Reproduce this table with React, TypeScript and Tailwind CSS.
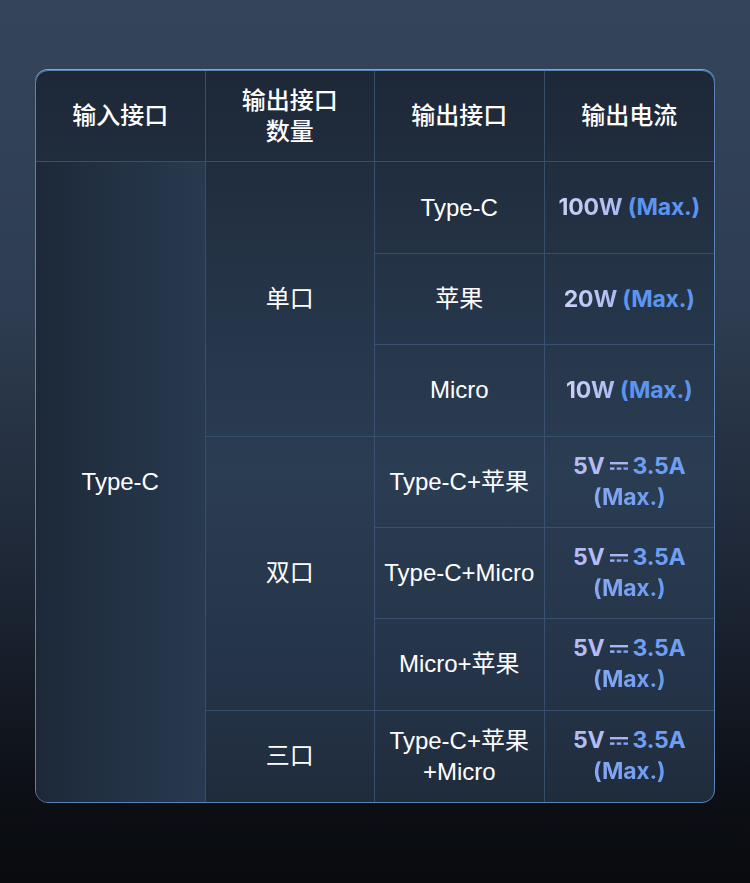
import React from 'react';

const txt = "font-['Liberation_Sans','Noto_Sans_CJK_SC',sans-serif]";
const num = "font-['Inter','Noto_Sans',sans-serif]";
const cell = 'flex items-center justify-center text-center border-[#40597a]/75';

/** DC symbol: solid bar over a dashed bar */
function DcMark() {
    return (
        <svg width="20" height="12" viewBox="0 0 20 12" className="mx-[4px] inline-block">
            <rect x="1" y="2" width="18" height="2.4" fill="#aab6f3" />
            <rect x="1" y="7.4" width="4.5" height="2.4" fill="#9aaef2" />
            <rect x="7.75" y="7.4" width="4.5" height="2.4" fill="#8aa6f2" />
            <rect x="14.5" y="7.4" width="4.5" height="2.4" fill="#7da0f2" />
        </svg>
    );
}

function Watt({ value }: { value: string }) {
    return (
        <span className={`${num} text-[23px] font-bold tracking-[-0.2px]`}>
            <span className="bg-gradient-to-r from-[#ccd2f6] to-[#a9b7f1] bg-clip-text text-transparent">{value} </span>
            <span className="text-[#5b95f0]">(Max.)</span>
        </span>
    );
}

function Amp() {
    return (
        <div className={`${num} text-[23px] font-bold leading-[31px] tracking-[-0.2px]`}>
            <div className="flex items-center justify-center">
                <span className="text-[#b3bcf4]">5V</span>
                <DcMark />
                <span className="text-[#6f9ff2]">3.5A</span>
            </div>
            <div className="bg-gradient-to-r from-[#93adf3] to-[#5b95f0] bg-clip-text text-transparent">(Max.)</div>
        </div>
    );
}

export default function App() {
    return (
        <div className="w-[750px] h-[883px] overflow-hidden bg-[linear-gradient(180deg,#34455a_0%,#2e3d51_35%,#1b2331_70%,#0c0f14_90%,#090b0f_100%)] pt-[70px]">
            <div className={`${txt} mx-[35px] w-[680px] h-[733px] rounded-[13px] border border-[#5a82ba] shadow-[0_-1px_0_#7ea6de] bg-[linear-gradient(180deg,#1d2837_0%,#26364a_35%,#2b3d53_55%,#243347_85%,#1f2c3c_100%)] overflow-hidden grid grid-cols-4 grid-rows-8 text-white text-[24px]`}>
                {/* Header */}
                <div className={`${cell} border-r border-b font-medium`}>输入接口</div>
                <div className={`${cell} border-r border-b font-medium leading-[31px]`}>
                    输出接口<br />数量
                </div>
                <div className={`${cell} border-r border-b font-medium`}>输出接口</div>
                <div className={`${cell} border-b font-medium`}>输出电流</div>

                {/* Input column */}
                <div className={`${cell} border-r row-span-7 bg-[linear-gradient(90deg,#1d2939,#283a4f)]`}>Type-C</div>

                {/* Single port */}
                <div className={`${cell} border-r border-b row-span-3`}>单口</div>
                <div className={`${cell} border-r border-b`}>Type-C</div>
                <div className={`${cell} border-b`}><Watt value="100W" /></div>
                <div className={`${cell} border-r border-b`}>苹果</div>
                <div className={`${cell} border-b`}><Watt value="20W" /></div>
                <div className={`${cell} border-r border-b`}>Micro</div>
                <div className={`${cell} border-b`}><Watt value="10W" /></div>

                {/* Dual port */}
                <div className={`${cell} border-r border-b row-span-3`}>双口</div>
                <div className={`${cell} border-r border-b`}>Type-C+苹果</div>
                <div className={`${cell} border-b`}><Amp /></div>
                <div className={`${cell} border-r border-b`}>Type-C+Micro</div>
                <div className={`${cell} border-b`}><Amp /></div>
                <div className={`${cell} border-r border-b`}>Micro+苹果</div>
                <div className={`${cell} border-b`}><Amp /></div>

                {/* Triple port */}
                <div className={`${cell} border-r`}>三口</div>
                <div className={`${cell} border-r leading-[31px]`}>
                    Type-C+苹果<br />+Micro
                </div>
                <div className={cell}><Amp /></div>
            </div>
        </div>
    );
}
